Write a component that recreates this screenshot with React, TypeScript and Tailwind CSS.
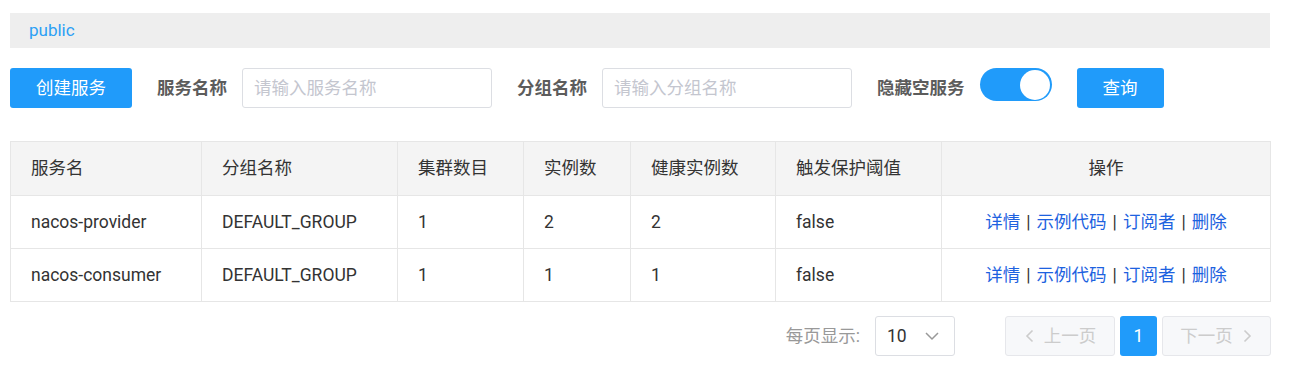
import React from 'react';

const font = { fontFamily: 'Roboto, "Noto Sans CJK SC", sans-serif' };

interface Service {
  name: string;
  group: string;
  clusters: number;
  instances: number;
  healthy: number;
  protect: string;
}

const services: Service[] = [
  { name: 'nacos-provider', group: 'DEFAULT_GROUP', clusters: 1, instances: 2, healthy: 2, protect: 'false' },
  { name: 'nacos-consumer', group: 'DEFAULT_GROUP', clusters: 1, instances: 1, healthy: 1, protect: 'false' },
];

const headers = ['服务名', '分组名称', '集群数目', '实例数', '健康实例数', '触发保护阈值'];
const widths = [191, 196, 126, 107, 145, 166, 329];

function ChevronLeft() {
  return (
    <svg width="12" height="16" viewBox="0 0 12 16" fill="none" stroke="currentColor" strokeWidth="1.6">
      <path d="M8.5 2.5 L3 8 L8.5 13.5" />
    </svg>
  );
}

function ChevronRight() {
  return (
    <svg width="12" height="16" viewBox="0 0 12 16" fill="none" stroke="currentColor" strokeWidth="1.6">
      <path d="M3.5 2.5 L9 8 L3.5 13.5" />
    </svg>
  );
}

function ChevronDown() {
  return (
    <svg width="16" height="10" viewBox="0 0 16 10" fill="none" stroke="currentColor" strokeWidth="1.5">
      <path d="M2 2 L8 8 L14 2" />
    </svg>
  );
}

export default function App() {
  return (
    <div className="bg-white w-[1299px] h-[372px] pl-[10px] text-[17.5px] text-[#333]" style={font}>
      {/* Namespace bar */}
      <div className="w-[1260px] mt-[13px] h-[35px] bg-[#eeeeee] flex items-center pl-[19px] text-[#2ca0f5] text-[17px]">
        public
      </div>

      {/* Search toolbar */}
      <div className="flex items-center mt-[20px] h-[40px]">
        <button className="w-[122px] h-[40px] bg-[#209bfa] text-white rounded-[3px]">创建服务</button>
        <span className="ml-[25px] mr-[15px] font-bold text-[#5c5c5c]">服务名称</span>
        <div className="w-[250px] h-[40px] border border-[#dcdee3] rounded-[3px] flex items-center pl-[11px] text-[#c4c6cf]">
          请输入服务名称
        </div>
        <span className="ml-[25px] mr-[15px] font-bold text-[#5c5c5c]">分组名称</span>
        <div className="w-[250px] h-[40px] border border-[#dcdee3] rounded-[3px] flex items-center pl-[11px] text-[#c4c6cf]">
          请输入分组名称
        </div>
        <span className="ml-[25px] mr-[15px] font-bold text-[#5c5c5c]">隐藏空服务</span>
        <div className="w-[72px] h-[33px] rounded-full bg-[#209bfa] flex items-center justify-end pr-[2px] self-start">
          <div className="w-[30px] h-[30px] rounded-full bg-white" />
        </div>
        <button className="ml-[25px] w-[87px] h-[40px] bg-[#209bfa] text-white rounded-[3px]">查询</button>
      </div>

      {/* Services table */}
      <table className="mt-[33px] w-[1260px] table-fixed border-collapse">
        <colgroup>
          {widths.map((w, i) => (
            <col key={i} style={{ width: w }} />
          ))}
        </colgroup>
        <thead>
          <tr className="h-[54px] bg-[#f4f4f4]">
            {headers.map((h) => (
              <th key={h} className="border border-[#e6e6e6] pl-[20px] text-left font-normal">
                {h}
              </th>
            ))}
            <th className="border border-[#e6e6e6] text-center font-normal">操作</th>
          </tr>
        </thead>
        <tbody>
          {services.map((s) => (
            <tr key={s.name} className="h-[53px]">
              <td className="border border-[#e6e6e6] pl-[20px]">{s.name}</td>
              <td className="border border-[#e6e6e6] pl-[20px]">{s.group}</td>
              <td className="border border-[#e6e6e6] pl-[20px]">{s.clusters}</td>
              <td className="border border-[#e6e6e6] pl-[20px]">{s.instances}</td>
              <td className="border border-[#e6e6e6] pl-[20px]">{s.healthy}</td>
              <td className="border border-[#e6e6e6] pl-[20px]">{s.protect}</td>
              <td className="border border-[#e6e6e6] text-center">
                <span className="text-[#1d62e0]">详情</span>
                <span className="mx-[6px]">|</span>
                <span className="text-[#1d62e0]">示例代码</span>
                <span className="mx-[6px]">|</span>
                <span className="text-[#1d62e0]">订阅者</span>
                <span className="mx-[6px]">|</span>
                <span className="text-[#1d62e0]">删除</span>
              </td>
            </tr>
          ))}
        </tbody>
      </table>

      {/* Pagination */}
      <div className="w-[1261px] flex items-center justify-end mt-[14px]">
        <span className="text-[#999] mr-[15px]">每页显示:</span>
        <div className="w-[80px] h-[40px] border border-[#dcdee3] rounded-[3px] flex items-center justify-between pl-[11px] pr-[14px]">
          <span>10</span>
          <span className="text-[#999]">
            <ChevronDown />
          </span>
        </div>
        <div className="ml-[50px] w-[110px] h-[40px] border border-[#e6e7eb] bg-[#f7f8fa] rounded-[3px] flex items-center justify-center gap-[8px] text-[#cccccc]">
          <ChevronLeft />
          <span>上一页</span>
        </div>
        <div className="ml-[5px] w-[37px] h-[40px] bg-[#209bfa] text-white rounded-[3px] flex items-center justify-center">
          1
        </div>
        <div className="ml-[5px] w-[109px] h-[40px] border border-[#e6e7eb] bg-[#f7f8fa] rounded-[3px] flex items-center justify-center gap-[8px] text-[#cccccc]">
          <span>下一页</span>
          <ChevronRight />
        </div>
      </div>
    </div>
  );
}
